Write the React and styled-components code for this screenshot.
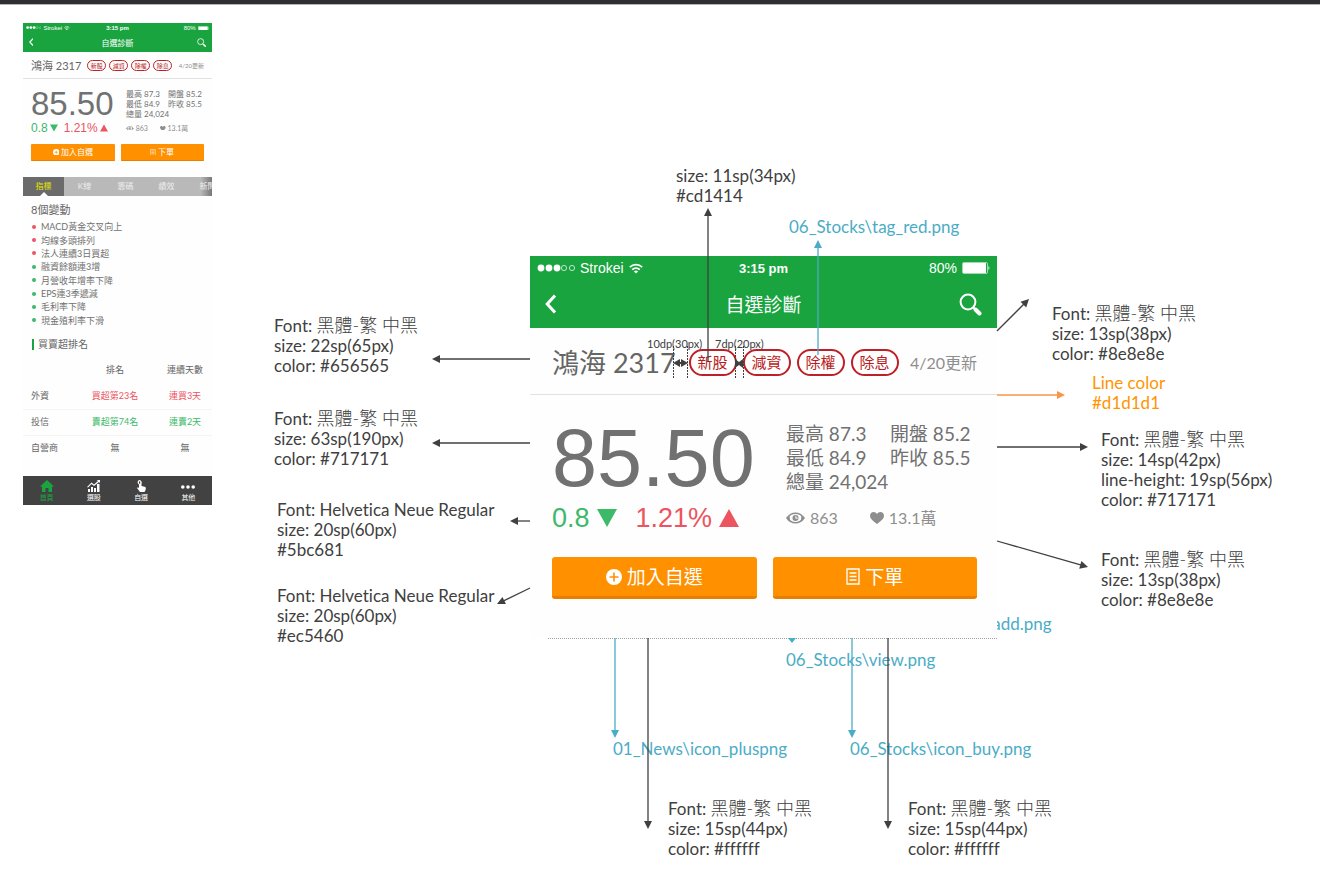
import React from "react";
import styled, { createGlobalStyle, ThemeProvider } from "styled-components";

const ink = "#404040";
const teal = "#4bacc6";
const green = "#1aa43f";
const up = "#ec5460";
const down = "#3cb969";

const gothic = `Lato, "Noto Sans CJK TC", sans-serif`;
const helvetica = `"Liberation Sans", "Noto Sans CJK TC", sans-serif`;

const GlobalStyle = createGlobalStyle`
  * { box-sizing: border-box; }
  body { margin: 0; background: #fff; color: ${ink}; font-family: ${gothic}; font-variant-ligatures: none; }
  h1, h2, h3, p, ul { margin: 0; padding: 0; font-weight: 400; }
  svg { display: block; flex: none; }
`;

const large = {
  width: 467, statusH: 24, navH: 48, statusPad: 7, navPad: 15, statusFont: 14, clockFont: 13, titleFont: 19,
  padL: 22, padR: 20, nameH: 67, nameTop: 3, nameFont: 27, tagsGap: 13, tagW: 48, tagH: 27, tagGap: 6, tagFont: 15,
  tagBorder: 2, dateFont: 16, quoteTop: 27, leftCol: 234, priceFont: 81, priceH: 72, infoFont: 19,
  infoCol: 104, infoLine: 24, changeGap: 8, changeH: 32, changeFont: 27, triangle: 20, changeSpace: 19,
  iconGap: 7, metricFont: 16, metricGap: 32, actionsTop: 23, buttonH: 42, buttonGap: 16, buttonFont: 19,
  buttonEdge: 3, radius: 3, bottom: 39,
};

const small = {
  width: 189, statusH: 10, navH: 19, statusPad: 3, navPad: 6, statusFont: 6, clockFont: 6, titleFont: 8,
  padL: 8, padR: 8, nameH: 27, nameTop: 1, nameFont: 11, tagsGap: 6, tagW: 19, tagH: 11, tagGap: 3, tagFont: 6,
  tagBorder: 1, dateFont: 6, quoteTop: 10, leftCol: 95, priceFont: 33, priceH: 30, infoFont: 8,
  infoCol: 42, infoLine: 10, changeGap: 2, changeH: 14, changeFont: 12, triangle: 8, changeSpace: 6,
  iconGap: 2, metricFont: 7, metricGap: 12, actionsTop: 9, buttonH: 17, buttonGap: 6, buttonFont: 8,
  buttonEdge: 1, radius: 1, bottom: 16,
};

const px = (key) => ({ theme }) => `${theme[key]}px`;

const Board = styled.main`
  position: relative;
  min-height: 100vh;
  overflow: hidden;
  background: #fff;
`;
const TopBar = styled.div`
  height: 5px;
  background: #2f2e33;
  border-bottom: 1px solid #b5b5b8;
`;
const Overview = styled.div`
  padding: 18px 23px;
`;
const Detail = styled.div`
  position: absolute;
  left: 530px;
  top: 256px;
`;
const Cut = styled.div`
  margin-left: 18px;
  border-bottom: 1px dotted #a0a0a0;
`;

const Phone = styled.section`
  width: ${px("width")};
  background: #fefefe;
  color: #656565;
`;
const GreenBar = styled.header`
  background: ${green};
  color: #fff;
`;
const Status = styled.div`
  display: grid;
  grid-template-columns: 1fr auto 1fr;
  align-items: center;
  height: ${px("statusH")};
  padding: 0 ${px("statusPad")};
  font: ${px("statusFont")} / 1 ${helvetica};
`;
const StatusSide = styled.div`
  display: flex;
  align-items: center;
  gap: ${({ theme }) => (theme.width > 200 ? 5 : 2)}px;
  justify-content: ${({ $end }) => ($end ? "flex-end" : "flex-start")};
`;
const Clock = styled.span`
  font-size: ${px("clockFont")};
  font-weight: 700;
`;
const Nav = styled.div`
  display: grid;
  grid-template-columns: 1fr auto 1fr;
  align-items: center;
  height: ${px("navH")};
  padding: 0 ${px("navPad")};
`;
const IconButton = styled.button`
  justify-self: ${({ $end }) => ($end ? "end" : "start")};
  padding: 0;
  border: 0;
  background: none;
  color: inherit;
`;
const Title = styled.h1`
  font-size: ${px("titleFont")};
  line-height: 1;
`;
const NameRow = styled.div`
  display: flex;
  align-items: center;
  height: ${px("nameH")};
  padding: ${px("nameTop")} ${px("padR")} 0 ${px("padL")};
  border-bottom: 1px solid #e2e2e2;
`;
const Name = styled.h2`
  font-size: ${px("nameFont")};
  line-height: 1;
  white-space: nowrap;
`;
const Tags = styled.ul`
  display: flex;
  gap: ${px("tagGap")};
  margin-left: ${px("tagsGap")};
  list-style: none;
`;
const Tag = styled.li`
  display: flex;
  align-items: center;
  justify-content: center;
  width: ${px("tagW")};
  height: ${px("tagH")};
  border: ${px("tagBorder")} solid #bd2026;
  border-radius: 14px;
  color: #b81c22;
  font-size: ${px("tagFont")};
  line-height: 1;
  white-space: nowrap;
`;
const Updated = styled.span`
  margin-left: auto;
  color: #8e8e8e;
  font-size: ${px("dateFont")};
  line-height: 1;
  white-space: nowrap;
`;
const Quote = styled.div`
  display: grid;
  grid-template-columns: ${px("leftCol")} 1fr;
  row-gap: ${px("changeGap")};
  padding: ${px("quoteTop")} 0 0 ${px("padL")};
`;
const Price = styled.p`
  color: #717171;
  font: ${px("priceFont")} / ${px("priceH")} ${helvetica};
`;
const Info = styled.div`
  display: grid;
  grid-template-columns: ${px("infoCol")} auto;
  justify-content: start;
  color: #717171;
  font-size: ${px("infoFont")};
  line-height: ${px("infoLine")};
  white-space: nowrap;
`;
const Changes = styled.div`
  display: flex;
  gap: ${px("changeSpace")};
  height: ${px("changeH")};
  font: ${px("changeFont")} / ${px("changeH")} ${helvetica};
`;
const Change = styled.span`
  display: flex;
  align-items: center;
  gap: ${px("iconGap")};
  color: ${({ $color }) => $color};
`;
const Metrics = styled.div`
  display: flex;
  align-items: center;
  gap: ${px("metricGap")};
  color: #8e8e8e;
  font-size: ${px("metricFont")};
  line-height: ${px("changeH")};
`;
const Metric = styled.span`
  display: flex;
  align-items: center;
  gap: ${({ theme }) => (theme.width > 200 ? 5 : 2)}px;
  white-space: nowrap;
`;
const Actions = styled.div`
  display: grid;
  grid-template-columns: 1fr 1fr;
  gap: ${px("buttonGap")};
  padding: ${px("actionsTop")} ${px("padR")} ${px("bottom")} ${px("padL")};
`;
const Action = styled.button`
  display: flex;
  align-items: center;
  justify-content: center;
  gap: ${({ theme }) => (theme.width > 200 ? 5 : 2)}px;
  height: ${px("buttonH")};
  padding: 0;
  border: 0;
  border-bottom: ${px("buttonEdge")} solid #e87f00;
  border-radius: ${px("radius")};
  background: #ff9000;
  color: #fff;
  font: ${px("buttonFont")} / 1 ${gothic};
  white-space: nowrap;
`;

const Tabs = styled.div`
  display: flex;
  overflow: hidden;
  height: 19px;
  background: linear-gradient(to right, #b9b9b9 94%, #777);
`;
const Tab = styled.button`
  position: relative;
  flex: 0 0 41px;
  padding: 0;
  border: 0;
  background: ${({ $active }) => ($active ? "#6b6b6b" : "transparent")};
  color: ${({ $active }) => ($active ? "#e6e600" : "#ededed")};
  font: 8px / 19px ${gothic};
  white-space: nowrap;
  &::after {
    content: "";
    display: ${({ $active }) => ($active ? "block" : "none")};
    position: absolute;
    left: 50%;
    bottom: 0;
    margin-left: -4px;
    border: 4px solid transparent;
    border-top-width: 0;
    border-bottom-color: #fff;
  }
`;
const Heading = styled.h3`
  padding: 7px 8px 3px;
  font-size: 11px;
  line-height: 14px;
`;
const Signals = styled.ul`
  display: grid;
  grid-auto-rows: 1fr;
  align-items: center;
  height: 107px;
  padding: 0 8px;
  list-style: none;
  color: #717171;
  font-size: 9px;
  line-height: 13px;
`;
const Signal = styled.li`
  display: flex;
  align-items: center;
  gap: 5px;
  &::before {
    content: "";
    width: 4px;
    height: 4px;
    margin-left: 1px;
    border-radius: 50%;
    background: ${({ $color }) => $color};
  }
`;
const RankHeading = styled.h3`
  margin: 12px 9px 0;
  padding-left: 4px;
  border-left: 2px solid ${green};
  font-size: 10px;
  line-height: 11px;
`;
const Ranks = styled.table`
  width: 100%;
  margin: 7px 0 15px;
  border-collapse: collapse;
  table-layout: fixed;
  font-size: 9px;
  line-height: 12px;
  th, td { height: 26px; padding: 0; font-weight: 400; text-align: center; white-space: nowrap; }
  th:first-child { width: 57px; padding-left: 8px; text-align: left; }
  td:nth-child(2), thead th:nth-child(2) { width: 70px; }
  td:last-child, thead th:last-child { padding-left: 8px; }
  tbody tr + tr { border-top: 1px solid #f4f4f4; }
`;
const Cell = styled.td`
  color: ${({ $color }) => $color || "inherit"};
`;
const TabBar = styled.nav`
  display: grid;
  grid-template-columns: repeat(4, 1fr);
  height: 29px;
  background: #424242;
`;
const TabLink = styled.a`
  display: flex;
  flex-direction: column;
  align-items: center;
  justify-content: center;
  gap: 1px;
  color: ${({ $active }) => ($active ? green : "#fff")};
  font-size: 7px;
  line-height: 9px;
  text-decoration: none;
`;

const Note = styled.p`
  position: absolute;
  left: ${({ $x }) => $x}px;
  top: ${({ $y }) => $y}px;
  color: ${({ $color }) => $color || ink};
  font-size: ${({ $small }) => ($small ? 11 : 17)}px;
  line-height: ${({ $small }) => ($small ? 14 : 20)}px;
  white-space: nowrap;
`;
const Han = styled.span`
  font-size: 18px;
  font-weight: 300;
`;
const Lines = styled.svg`
  position: absolute;
  left: 0;
  top: 0;
  overflow: visible;
  pointer-events: none;
`;

function SignalDots({ k }) {
  return (
    <svg width={38 * k} height={8 * k} viewBox="0 0 38 8" aria-hidden="true">
      {[4, 12, 20, 27, 35].map((cx, i) => (
        <circle key={cx} cx={cx} cy="4" r={i < 3 ? 3.4 : 2.6} fill={i < 3 ? "#fff" : "none"} stroke="#fff" strokeWidth={i < 3 ? 0 : 0.7} />
      ))}
    </svg>
  );
}
function Wifi({ k }) {
  return (
    <svg width={14 * k} height={11 * k} viewBox="0 0 14 11" fill="none" stroke="#fff" strokeWidth="1.7" aria-hidden="true">
      <path d="M.8 4.2C4.4.7 9.6.7 13.2 4.2M3.2 6.6c2.2-2.1 5.4-2.1 7.6 0" />
      <path d="M7 10.6 4.9 8.4c1.2-1.1 3-1.1 4.2 0z" fill="#fff" stroke="none" />
    </svg>
  );
}
function Battery({ k }) {
  return (
    <svg width={28 * k} height={12 * k} viewBox="0 0 28 12" aria-hidden="true">
      <rect x=".5" y=".5" width="25" height="11" rx="1.5" fill="none" stroke="#fff" strokeWidth=".6" />
      <rect x="1" y="1" width="23" height="10" rx=".5" fill="#fff" />
      <path d="M26.500 4c1.200.8 1.200 3.200 0 4z" fill="#fff" />
    </svg>
  );
}
function Back({ k }) {
  return (
    <svg width={11 * k} height={20 * k} viewBox="0 0 11 20" fill="none" stroke="#fff" strokeWidth="3" aria-hidden="true">
      <path d="M10 1.5 2.2 10l7.8 8.5" />
    </svg>
  );
}
function Search({ k }) {
  return (
    <svg width={23 * k} height={23 * k} viewBox="0 0 23 23" fill="none" stroke="#fff" aria-hidden="true">
      <circle cx="9" cy="9" r="7.4" strokeWidth="2" />
      <path d="m14 14 2 2" strokeWidth="2" />
      <path d="m16.5 16.5 4 4" strokeWidth="4" strokeLinecap="round" />
    </svg>
  );
}
function Triangle({ size, flip }) {
  return (
    <svg width={size} height={size} viewBox="0 0 20 20" fill="currentColor" aria-hidden="true">
      <path d={flip ? "M0 1h20L10 19z" : "M0 19h20L10 1z"} />
    </svg>
  );
}
function Eye({ k }) {
  return (
    <svg width={19 * k} height={12 * k} viewBox="0 0 19 12" fill="none" aria-hidden="true">
      <path d="M1 6c2.300-3.300 5.200-4.800 8.500-4.800S15.700 2.700 18 6c-2.300 3.300-5.200 4.800-8.500 4.800S3.300 9.300 1 6z" stroke="currentColor" strokeWidth="1.600" />
      <path d="M3.500 3.300C1.500 5 1 6 1 6s1 2 3.500 3.300C3.700 7 3.700 5 3.500 3.300zM15.500 3.300C17.500 5 18 6 18 6s-1 2-3.500 3.300c.8-2.300.8-4.300 1-6z" fill="currentColor" />
      <circle cx="9.500" cy="6" r="3" fill="currentColor" />
      <path d="M9.800 4.200v2h2" stroke="#fff" strokeWidth="1" />
    </svg>
  );
}
function Heart({ k }) {
  return (
    <svg width={14 * k} height={12 * k} viewBox="0 0 14 12" fill="currentColor" aria-hidden="true">
      <path d="M7 12C3.5 9.300 0 6.900 0 3.700 0 1.500 1.600 0 3.600 0 5 0 6.300.7 7 2c.7-1.300 2-2 3.400-2C12.400 0 14 1.500 14 3.700 14 6.900 10.500 9.300 7 12z" />
    </svg>
  );
}
function Plus({ k }) {
  return (
    <svg width={16 * k} height={16 * k} viewBox="0 0 16 16" aria-hidden="true">
      <circle cx="8" cy="8" r="8" fill="#fff" />
      <path d="M8 3.500v9M3.500 8h9" stroke="#ff9000" strokeWidth="1.600" />
    </svg>
  );
}
function Order({ k }) {
  return (
    <svg width={14 * k} height={17 * k} viewBox="0 0 14 17" fill="none" stroke="#fff" strokeWidth="1.300" aria-hidden="true">
      <path d="M1 1h12v15H1zM3.500 5h7M3.500 8.500h7M3.500 12h7" />
    </svg>
  );
}

function QuoteScreen({ dims, children }) {
  const k = dims.width / large.width;
  return (
    <ThemeProvider theme={dims}>
      <Phone>
        <GreenBar>
          <Status>
            <StatusSide><SignalDots k={k} />Strokei<Wifi k={k} /></StatusSide>
            <Clock>3:15 pm</Clock>
            <StatusSide $end>80%<Battery k={k} /></StatusSide>
          </Status>
          <Nav>
            <IconButton aria-label="返回"><Back k={k} /></IconButton>
            <Title>自選診斷</Title>
            <IconButton $end aria-label="搜尋"><Search k={k} /></IconButton>
          </Nav>
        </GreenBar>
        <NameRow>
          <Name>鴻海 2317</Name>
          <Tags>
            {["新股", "減資", "除權", "除息"].map((t) => <Tag key={t}>{t}</Tag>)}
          </Tags>
          <Updated>4/20更新</Updated>
        </NameRow>
        <Quote>
          <Price>85.50</Price>
          <Info>
            <span>最高 87.3</span><span>開盤 85.2</span>
            <span>最低 84.9</span><span>昨收 85.5</span>
            <span>總量 24,024</span>
          </Info>
          <Changes>
            <Change $color={down}>0.8<Triangle size={dims.triangle} flip /></Change>
            <Change $color={up}>1.21%<Triangle size={dims.triangle} /></Change>
          </Changes>
          <Metrics>
            <Metric><Eye k={k} />863</Metric>
            <Metric><Heart k={k} />13.1萬</Metric>
          </Metrics>
        </Quote>
        <Actions>
          <Action><Plus k={k} />加入自選</Action>
          <Action><Order k={k} />下單</Action>
        </Actions>
        {children}
      </Phone>
    </ThemeProvider>
  );
}

const signals = [
  ["MACD黃金交叉向上", up], ["均線多頭排列", up], ["法人連續3日買超", up],
  ["融資餘額連3增", down], ["月營收年增率下降", down], ["EPS連3季遞減", down],
  ["毛利率下降", down], ["現金殖利率下滑", down],
];
const ranks = [
  ["外資", "買超第23名", "連買3天", up],
  ["投信", "賣超第74名", "連賣2天", down],
  ["自營商", "無", "無"],
];
const tabBar = [
  ["首頁", <path key="i" d="M7 0 0 6.500h2V12h3.500V8h3v4H12V6.500h2z" />],
  ["選股", <path key="i" d="M1 9h2v3H1zM4 7h2v5H4zM7 8h2v4H7zM10 4h2.500v8H10zM0 7l4.500-4.500 2.500 2L11 1 9.500.200 13 0v3L12 2 7 6 4.500 4 1 7.500z" />],
  ["自選", <path key="i" d="M5 0a2.800 2.800 0 0 1 2.500 4v2l4 1c.8 2 0 3.500-1 5H6L3 8l1-.8 1 .8V4.500A2.500 2.500 0 0 1 5 0zm0 1.200v2.500l1.200-.2V1.500z" />],
  ["其他", <path key="i" d="M0 7a1.800 1.800 0 1 1 3.600 0A1.800 1.800 0 0 1 0 7zm5.200 0a1.800 1.800 0 1 1 3.600 0 1.800 1.800 0 0 1-3.600 0zm5.200 0A1.800 1.800 0 1 1 14 7a1.800 1.800 0 0 1-3.600 0z" />],
];

const cjkFont = <>Font: <Han>黑體-繁 中黑</Han></>;
const neue = "Font: Helvetica Neue Regular";
const notes = [
  { x: 274, y: 315, lines: [cjkFont, "size: 22sp(65px)", "color: #656565"] },
  { x: 274, y: 408, lines: [cjkFont, "size: 63sp(190px)", "color: #717171"] },
  { x: 277, y: 500, lines: [neue, "size: 20sp(60px)", "#5bc681"] },
  { x: 277, y: 586, lines: [neue, "size: 20sp(60px)", "#ec5460"] },
  { x: 676, y: 166, lines: ["size: 11sp(34px)", "#cd1414"] },
  { x: 789, y: 217, color: teal, lines: ["06_Stocks\\tag_red.png"] },
  { x: 786, y: 650, color: teal, lines: ["06_Stocks\\view.png"] },
  { x: 613, y: 739, color: teal, lines: ["01_News\\icon_pluspng"] },
  { x: 850, y: 739, color: teal, lines: ["06_Stocks\\icon_buy.png"] },
  { x: 668, y: 798, lines: [cjkFont, "size: 15sp(44px)", "color: #ffffff"] },
  { x: 908, y: 798, lines: [cjkFont, "size: 15sp(44px)", "color: #ffffff"] },
  { x: 1052, y: 303, lines: [cjkFont, "size: 13sp(38px)", "color: #8e8e8e"] },
  { x: 1092, y: 373, color: "#ff9500", lines: ["Line color", "#d1d1d1"] },
  { x: 1101, y: 429, lines: [cjkFont, "size: 14sp(42px)", "line-height: 19sp(56px)", "color: #717171"] },
  { x: 1101, y: 549, lines: [cjkFont, "size: 13sp(38px)", "color: #8e8e8e"] },
  { x: 647, y: 337, small: true, lines: ["10dp(30px)"] },
  { x: 715, y: 337, small: true, lines: ["7dp(20px)"] },
];

const arrows = [
  [530, 359, 432, 359], [530, 443, 432, 443], [530, 521, 510, 521], [530, 588, 497, 604],
  [997, 331, 1029, 299], [997, 395, 1065, 395, "#f79646"], [997, 447, 1088, 447], [997, 541, 1088, 567],
  [708, 362, 708, 208], [818, 355, 818, 240, teal],
  [615, 638, 615, 738, teal], [648, 638, 648, 829], [852, 638, 852, 738, teal], [888, 638, 888, 829],
];

function Arrow({ x1, y1, x2, y2, color = ink }) {
  const len = Math.hypot(x2 - x1, y2 - y1);
  const deg = (Math.atan2(y2 - y1, x2 - x1) * 180) / Math.PI;
  return (
    <g transform={`translate(${x1} ${y1}) rotate(${deg})`} fill={color} stroke={color}>
      <path d={`M0 0H${len - 5}`} strokeWidth="1.300" />
      <path d={`M${len} 0l-8-4v8z`} stroke="none" />
    </g>
  );
}

export default function App() {
  return (
    <Board>
      <GlobalStyle />
      <TopBar />
      <Overview>
        <QuoteScreen dims={small}>
          <Tabs role="tablist">
            {["指標", "K線", "籌碼", "績效", "新聞"].map((t, i) => (
              <Tab key={t} role="tab" aria-selected={i === 0} $active={i === 0}>{t}</Tab>
            ))}
          </Tabs>
          <Heading>8個變動</Heading>
          <Signals>
            {signals.map(([t, c]) => <Signal key={t} $color={c}>{t}</Signal>)}
          </Signals>
          <RankHeading>買賣超排名</RankHeading>
          <Ranks>
            <thead><tr><th aria-label="法人" /><th>排名</th><th>連續天數</th></tr></thead>
            <tbody>
              {ranks.map(([n, r, d, c]) => (
                <tr key={n}><th scope="row">{n}</th><Cell $color={c}>{r}</Cell><Cell $color={c}>{d}</Cell></tr>
              ))}
            </tbody>
          </Ranks>
          <TabBar>
            {tabBar.map(([t, icon], i) => (
              <TabLink key={t} href="#" $active={i === 0}>
                <svg width="14" height="12" viewBox="0 0 14 12" fill="currentColor" aria-hidden="true">{icon}</svg>
                {t}
              </TabLink>
            ))}
          </TabBar>
        </QuoteScreen>
      </Overview>

      <Note $x={909} $y={614} $color={teal}>06_Stocks\add.png</Note>
      <Detail>
        <QuoteScreen dims={large} />
        <Cut />
      </Detail>
      {notes.map((n) => (
        <Note key={`${n.x}-${n.y}`} $x={n.x} $y={n.y} $color={n.color} $small={n.small}>
          {n.lines.map((l, i) => <React.Fragment key={i}>{i > 0 && <br />}{l}</React.Fragment>)}
        </Note>
      ))}
      <Lines width="1" height="1" aria-hidden="true">
        {arrows.map(([x1, y1, x2, y2, color]) => (
          <Arrow key={`${x1}-${y1}`} x1={x1} y1={y1} x2={x2} y2={y2} color={color} />
        ))}
        <path d="M788 638h8l-4 5z" fill={teal} />
        <path d="M673.500 346v33M687.500 346v33M735.500 346v33M743.500 346v33" stroke={ink} strokeDasharray="2 1" />
        <path d="M673 363l7-4v3h1v-3l7 4-7 4v-3h-1v3zM735 359l4 3 4-3v9l-4-3-4 3z" fill={ink} />
      </Lines>
    </Board>
  );
}
